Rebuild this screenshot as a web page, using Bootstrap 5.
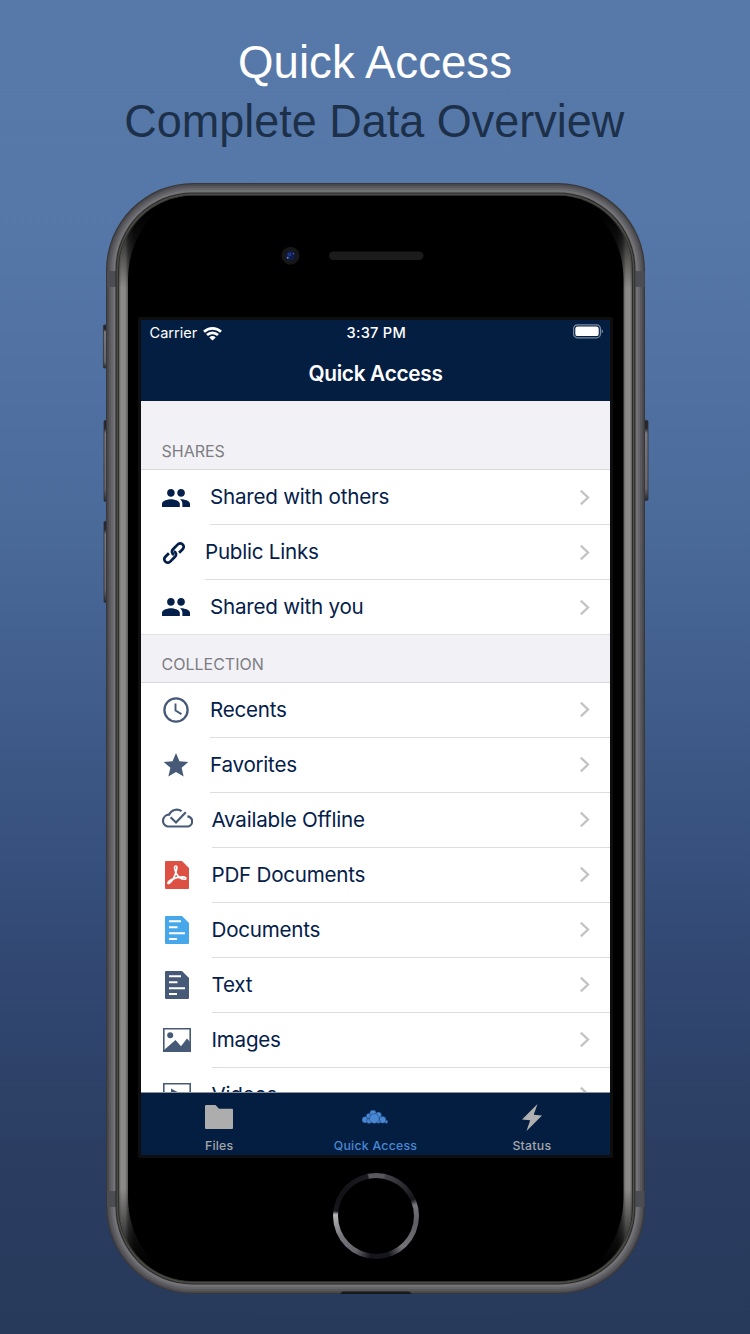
<!DOCTYPE html>
<html lang="en">
<head>
<meta charset="utf-8">
<meta name="viewport" content="width=device-width, initial-scale=1">
<title>Quick Access</title>
<link rel="stylesheet" href="https://cdn.jsdelivr.net/npm/bootstrap@5.3.0/dist/css/bootstrap.min.css">
<style>
  body{width:750px;height:1334px;background:linear-gradient(#5779a9 0,#5678a9 210px,#4a6a9a 530px,#334a76 930px,#2a3c5f 1180px,#283a5c 100%);font-family:Inter,"Liberation Sans",sans-serif}
  .hero{height:183px;padding-top:32px;font-family:"Liberation Sans",sans-serif;font-size:47px;line-height:59px;color:#1d3049}
  .hero span{transform:scaleX(.957);margin-right:1px}
  .hero span:first-child{transform:scaleX(.971);margin:0}
  .phone{width:539px;height:1111px;margin-left:106px;padding-top:134px}
  .frame-art{left:-6px;top:-1px}
  .glass{width:475px;height:841px;padding:3px;background:#0e0e0f;border-radius:2px}
  .screen{width:469px;height:835px;background:#fff}
  .top-bar{height:81px;background:#041e42}
  .status{height:27px;padding:0 7px 0 8.5px;font-size:14.6px;line-height:27px}
  .status>*{flex:1 1 0}
  .clock{letter-spacing:.25px}
  .page-title{font-size:20.8px;line-height:53px;font-weight:600;letter-spacing:-.3px}
  .sect{background:#f2f1f6;color:#7d7d83;font-size:16px;padding:0 0 8px 20.5px;line-height:20px;border-bottom:1px solid #d9d9dd;height:48.5px}
  .sect.first{height:69px}
  .rows{color:#04204a;font-size:20.6px;letter-spacing:-.23px}
  .sect{letter-spacing:0}
  .item{height:55px}
  .item.final{height:54px}
  .ico{width:69px;padding-left:35px}
  .ico svg{transform:translateX(-50%);flex:none}
  .w-link{width:64px;padding-left:33px}
  .w-wide{width:70.5px;padding-left:36px}
  .item-body{border-bottom:1px solid #dedee0;padding-right:20.5px}
  .item-body span{padding-top:1px}
  .slate{color:#465a78}
  .tabs{height:63px;background:#041e42;border-top:1px solid #8b929c;color:#a4a6aa;font-size:12.3px;font-weight:500;letter-spacing:.25px}
  .tabs .tab-ico{height:44px;padding-top:4px}
  .tabs .on{color:#4a87d2}
  .list-area{height:691px}
  .home{width:86px;height:86px;margin-top:15px;background:conic-gradient(#5a595e 0 10deg,#44434a 14deg,#15151b 66deg,#77767c 74deg,#5f5e65 100deg,#74737a 140deg,#15151c 162deg 188deg,#66656c 210deg,#77767c 240deg,#b5b5b5 272deg,#18181e 277deg,#111116 300deg,#1b1b21 348deg,#5a595e 350deg)}
  .home i{width:76px;height:76px;background:#000}
</style>
</head>
<body class="m-0 overflow-hidden">
<svg class="d-none">
  <symbol id="people" viewBox="1 5 22 14"><path fill="currentColor" d="M16 11c1.66 0 2.99-1.34 2.99-3S17.66 5 16 5c-1.66 0-3 1.34-3 3s1.34 3 3 3zm-8 0c1.66 0 2.99-1.34 2.99-3S9.66 5 8 5C6.34 5 5 6.34 5 8s1.34 3 3 3zm0 2c-2.33 0-7 1.17-7 3.5V19h14v-2.5c0-2.33-4.67-3.5-7-3.5zm8 0c-.29 0-.62.02-.97.05 1.16.84 1.97 1.97 1.97 3.45V19h6v-2.5c0-2.33-4.67-3.5-7-3.5z"/></symbol>
  <symbol id="chev" viewBox="0 0 11 17"><path d="M1.8 1.6 9 8.5 1.8 15.4" fill="none" stroke="#c3c3c6" stroke-width="2.3"/></symbol>
  <symbol id="doc" viewBox="0 0 24 28"><path fill="currentColor" d="M1 0H17L24 7V27a1 1 0 0 1-1 1H1a1 1 0 0 1-1-1V1a1 1 0 0 1 1-1z"/><path d="M4 5.3H16M4 11.3H12.5M4 17.2H20M4 23H12" stroke="#fff" stroke-width="2.1"/></symbol>
</svg>

<header class="hero d-flex flex-column align-items-center text-nowrap">
  <span class="text-white">Quick Access</span>
  <span>Complete Data Overview</span>
</header>

<main class="phone position-relative d-flex flex-column align-items-center">
  <svg class="frame-art position-absolute" width="551" height="1114" viewBox="100 182 551 1114">
    <defs>
      <linearGradient id="side"><stop offset="0" stop-color="#5e5e5c"/><stop offset=".004" stop-color="#8c8b89"/><stop offset=".012" stop-color="#8a8988"/><stop offset=".019" stop-color="#4a4a4a"/><stop offset=".03" stop-color="#222"/><stop offset=".1" stop-color="#000"/><stop offset=".9" stop-color="#000"/><stop offset=".97" stop-color="#222"/><stop offset=".981" stop-color="#4a4a4a"/><stop offset=".988" stop-color="#8a8988"/><stop offset=".996" stop-color="#8c8b89"/><stop offset="1" stop-color="#5e5e5c"/></linearGradient>
      <linearGradient id="fade" x2="0" y2="1"><stop offset="0"/><stop offset=".012"/><stop offset=".085" stop-opacity="0"/><stop offset=".915" stop-opacity="0"/><stop offset=".988"/><stop offset="1"/></linearGradient>
      <linearGradient id="key" x2="0" y2="1"><stop offset="0" stop-color="#222329"/><stop offset=".1" stop-color="#28292e"/><stop offset=".16" stop-color="#77777c"/><stop offset=".85" stop-color="#66666b"/><stop offset="1" stop-color="#26272b"/></linearGradient>
    </defs>
    <g fill="url(#key)" stroke="#303137" stroke-width=".8">
      <rect x="103.4" y="325" width="5" height="43" rx="1"/>
      <rect x="104" y="420.4" width="5" height="81" rx="1"/>
      <rect x="104" y="521.4" width="5" height="81" rx="1"/>
      <rect x="643" y="420.4" width="5" height="80" rx="1"/>
    </g>
    <rect x="106" y="183" width="539" height="1111" rx="87" fill="#38383b"/>
    <rect x="107.2" y="184.2" width="536.6" height="1108.6" rx="86" fill="#4c4c50"/>
    <rect x="109" y="186" width="533" height="1105" rx="84" fill="#59595d"/>
    <rect x="111" y="188" width="529" height="1101" rx="82" fill="#65656a"/>
    <rect x="113" y="190" width="525" height="1097" rx="80" fill="#727277"/>
    <g fill="#4b4d53"><path d="M107 271h9v16h-9zM635.5 271h9v16h-9zM107 1191h9v16h-9zM635.5 1191h9v16h-9z"/></g>
    <rect x="115.5" y="192.5" width="520" height="1092" rx="77" fill="#2b2c2a"/>
    <rect x="116.6" y="193.6" width="517.8" height="1089.8" rx="76" fill="#4b4c46"/>
    <rect x="118" y="195" width="515" height="1087" rx="75" fill="#2d2d2c"/>
    <rect x="119" y="196" width="513" height="1085" rx="74" fill="url(#side)"/>
    <rect x="119" y="196" width="513" height="1085" rx="74" fill="url(#fade)"/>
    <rect x="128" y="196" width="495.5" height="1085" rx="71" ry="84" fill="#000"/>
    <circle cx="290.5" cy="255.7" r="9" fill="#17171a"/>
    <circle cx="290.5" cy="255.7" r="4.6" fill="#101d4a"/>
    <circle cx="289.5" cy="254.5" r="2" fill="#1d3480"/><circle cx="287.7" cy="257.8" r="1" fill="#6790c8"/><circle cx="293.4" cy="253.6" r=".8" fill="#4767a8"/>
    <rect x="329" y="251.5" width="94.5" height="8.5" rx="4.2" fill="#1b1b1c"/>
    <path d="M340 1294 342.5 1291.6H409L412 1294z" fill="#19191b"/>
  </svg>

  <div class="glass position-relative">
    <div class="screen d-flex flex-column overflow-hidden">
      <div class="top-bar text-white">
        <div class="status d-flex">
          <div class="d-flex align-items-center"><span>Carrier</span>
            <svg width="21" height="15" viewBox="0 0 21 15" fill="none" stroke="#fff" stroke-width="2.7" style="margin-left:5px;margin-bottom:1px"><path d="M2 5.8a12.200 12.200 0 0 1 17 0M5 9a8 8 0 0 1 11 0"/><path d="M10.5 14.6 7.3 11.400a4.500 4.500 0 0 1 6.400 0z" fill="#fff" stroke="none"/></svg>
          </div>
          <div class="clock text-center fw-medium">3:37 PM</div>
          <div class="d-flex justify-content-end align-items-center"><svg class="mb-1" width="30" height="15" viewBox="0 0 30 15"><rect x=".6" y=".8" width="26.8" height="13" rx="3.8" fill="none" stroke="#7c8ba0" stroke-width="1.2"/><rect x="2.3" y="2.5" width="23.4" height="9.600" rx="2.2" fill="#fff"/><path d="M28.6 5.2v4.2q1.400-.7 1.400-2.100t-1.400-2.100z" fill="#7c8ba0"/></svg></div>
        </div>
        <div class="page-title text-center">Quick Access</div>
      </div>

      <div class="list-area overflow-hidden rows">
        <div class="sect first d-flex align-items-end">SHARES</div>
        <div class="item d-flex"><div class="ico d-flex align-items-center"><svg width="28" height="18"><use href="#people"/></svg></div><div class="item-body flex-fill d-flex align-items-center justify-content-between"><span>Shared with others</span><svg width="11" height="17"><use href="#chev"/></svg></div></div>
        <div class="item d-flex"><div class="ico w-link d-flex align-items-center"><svg width="22" height="22" viewBox="-11 -11 22 22" fill="none" stroke="currentColor" stroke-width="2.8"><g transform="rotate(-45)"><path d="M-3.800-3.400H-8.800A3.400 3.400 0 0 0-8.800 3.400H-2A3.400 3.400 0 0 0 1.200-1.200"/><path d="M3.800 3.400H8.800A3.400 3.400 0 0 0 8.800-3.400H2A3.400 3.400 0 0 0-1.200 1.200"/></g></svg></div><div class="item-body flex-fill d-flex align-items-center justify-content-between"><span>Public Links</span><svg width="11" height="17"><use href="#chev"/></svg></div></div>
        <div class="item final d-flex"><div class="ico d-flex align-items-center"><svg width="28" height="18"><use href="#people"/></svg></div><div class="item-body border-0 flex-fill d-flex align-items-center justify-content-between"><span>Shared with you</span><svg width="11" height="17"><use href="#chev"/></svg></div></div>

        <div class="sect border-top d-flex align-items-end">COLLECTION</div>
        <div class="item d-flex"><div class="ico slate d-flex align-items-center"><svg width="26" height="26" viewBox="0 0 26 26" fill="none" stroke="currentColor"><circle cx="13" cy="13" r="11.6" stroke-width="2.3"/><path d="M12.5 6.500v7l6 3.600" stroke-width="1.9"/></svg></div><div class="item-body flex-fill d-flex align-items-center justify-content-between"><span>Recents</span><svg width="11" height="17"><use href="#chev"/></svg></div></div>
        <div class="item d-flex"><div class="ico slate d-flex align-items-center"><svg width="25" height="23.5" viewBox="2 2 20 19"><path fill="currentColor" d="M12 17.270 18.180 21l-1.640-7.030L22 9.240l-7.190-.61L12 2 9.190 8.630 2 9.240l5.460 4.730L5.820 21z"/></svg></div><div class="item-body flex-fill d-flex align-items-center justify-content-between"><span>Favorites</span><svg width="11" height="17"><use href="#chev"/></svg></div></div>
        <div class="item d-flex"><div class="ico w-wide slate d-flex align-items-center"><svg width="32" height="20" viewBox="0 0 32 20" fill="none" stroke="currentColor" stroke-width="2.2" class="mb-1"><path d="M20.600 3.200A8.500 8.500 0 0 0 8 6.700 6 6 0 0 0 6.500 18.500H25.800a5 5 0 0 0 .6-10.100"/><path d="M9.600 9.200l5.400 5.300L24.800 4.200"/></svg></div><div class="item-body flex-fill d-flex align-items-center justify-content-between"><span>Available Offline</span><svg width="11" height="17"><use href="#chev"/></svg></div></div>
        <div class="item d-flex"><div class="ico w-wide d-flex align-items-center"><svg width="24" height="28" viewBox="0 0 24 28"><path fill="#dd5044" d="M1 0H17L24 7V27a1 1 0 0 1-1 1H1a1 1 0 0 1-1-1V1a1 1 0 0 1 1-1z"/><path d="M10.700 5c-2.200.2-.8 4.400.6 7.300 1.700 3.300 4.600 5.900 8.200 5.900 2.300 0 2-2.200-1.600-2.300-4 0-8.300 1-11.800 2.900-4 2.200-4 4.700-1.800 3.400 2.600-1.600 5.400-6.600 6.800-11.400C12 7.500 12.500 4.800 10.700 5z" fill="none" stroke="#fff" stroke-width="1.6"/></svg></div><div class="item-body flex-fill d-flex align-items-center justify-content-between"><span>PDF Documents</span><svg width="11" height="17"><use href="#chev"/></svg></div></div>
        <div class="item d-flex"><div class="ico w-wide d-flex align-items-center" style="color:#46a8eb"><svg width="24" height="28"><use href="#doc"/></svg></div><div class="item-body flex-fill d-flex align-items-center justify-content-between"><span>Documents</span><svg width="11" height="17"><use href="#chev"/></svg></div></div>
        <div class="item d-flex"><div class="ico w-wide slate d-flex align-items-center"><svg width="24" height="28"><use href="#doc"/></svg></div><div class="item-body flex-fill d-flex align-items-center justify-content-between"><span>Text</span><svg width="11" height="17"><use href="#chev"/></svg></div></div>
        <div class="item d-flex"><div class="ico w-wide slate d-flex align-items-center"><svg width="28" height="24" viewBox="0 0 28 24"><path d="M.8.800H27.200V23.200H.8z" fill="none" stroke="currentColor" stroke-width="1.6"/><circle cx="7.2" cy="7.2" r="3" fill="currentColor"/><path fill="currentColor" d="M1 22 12.500 12 18 18.300 24 10.500 27 14V23H1z"/></svg></div><div class="item-body flex-fill d-flex align-items-center justify-content-between"><span>Images</span><svg width="11" height="17"><use href="#chev"/></svg></div></div>
        <div class="item d-flex"><div class="ico w-wide slate d-flex align-items-center"><svg width="28" height="24" viewBox="0 0 28 24"><path d="M.8.800H27.200V23.200H.8z" fill="none" stroke="currentColor" stroke-width="1.6"/><path fill="currentColor" d="M8 5.500 20 12 8 18.500z"/></svg></div><div class="item-body flex-fill d-flex align-items-center justify-content-between"><span>Videos</span><svg width="11" height="17"><use href="#chev"/></svg></div></div>
      </div>

      <nav class="tabs row g-0 text-center">
        <div class="col"><div class="tab-ico d-flex justify-content-center align-items-center"><svg width="28" height="24" viewBox="0 0 28 24"><path fill="#adadad" d="M1 0H10.500L14 3.700H27a1 1 0 0 1 1 1V23a1 1 0 0 1-1 1H1a1 1 0 0 1-1-1V1a1 1 0 0 1 1-1z"/></svg></div>Files</div>
        <div class="col on"><div class="tab-ico d-flex justify-content-center align-items-center"><svg width="26" height="14" viewBox="0 0 26 14" fill="#4a87d2" stroke="#0b2c5c" stroke-width=".4"><circle cx="3.2" cy="9.8" r="3.3"/><circle cx="7" cy="6" r="2.8"/><circle cx="11" cy="3.4" r="3.3"/><circle cx="16.5" cy="5" r="3"/><circle cx="24.2" cy="11.8" r="1.7"/><circle cx="20.5" cy="9.8" r="3.5"/><circle cx="7.2" cy="11" r="2.6"/><circle cx="16.4" cy="11.5" r="2"/><circle cx="12.3" cy="8.6" r="4.9"/></svg></div>Quick Access</div>
        <div class="col"><div class="tab-ico d-flex justify-content-center align-items-center"><svg width="20" height="27" viewBox="0 0 20 27"><path fill="#b0b0b0" d="M15.500 0 0 15.500l8.200.8L4.500 27 20 11.500l-8.300-.7z"/></svg></div>Status</div>
      </nav>
    </div>
  </div>
  <div class="home position-relative rounded-circle d-flex align-items-center justify-content-center"><i class="rounded-circle"></i></div>
</main>
<script src="https://cdn.jsdelivr.net/npm/bootstrap@5.3.0/dist/js/bootstrap.bundle.min.js"></script>
</body>
</html>
